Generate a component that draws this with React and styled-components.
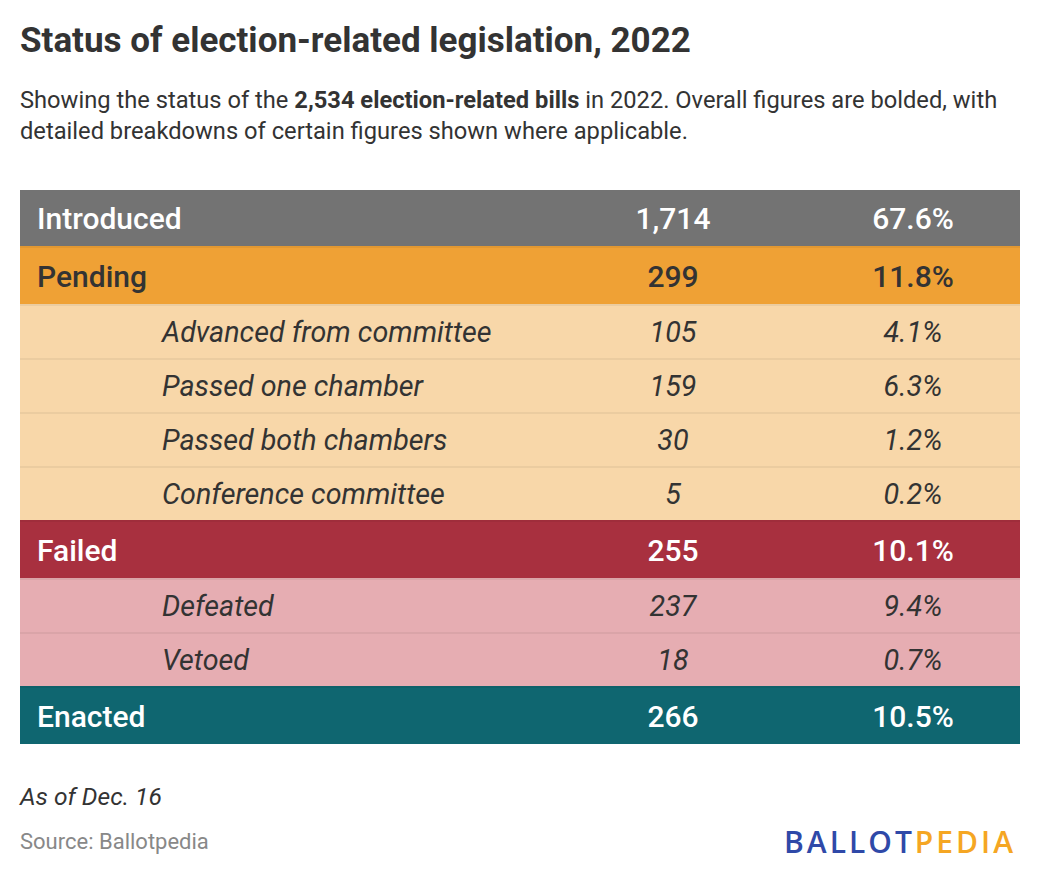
import React from "react";
import styled, { createGlobalStyle } from "styled-components";

const Global = createGlobalStyle`
  html, body { margin: 0; padding: 0; background: #fff; }
  body { font-family: Roboto, "Liberation Sans", sans-serif; color: #333; }
`;

const Page = styled.div`
  width: 1040px;
  height: 884px;
  box-sizing: border-box;
  padding: 19px 20px 0 20px;
  display: flex;
  flex-direction: column;
`;

const Title = styled.h1`
  margin: 0;
  font-size: 35px;
  line-height: 44px;
  font-weight: 700;
  color: #333;
`;

const Subtitle = styled.p`
  margin: 22px 0 0 0;
  font-size: 23.7px;
  line-height: 31px;
  color: #333;
`;

const Strong = styled.strong`
  font-weight: 700;
`;

const Table = styled.div`
  margin-top: 43px;
  width: 1000px;
  display: flex;
  flex-direction: column;
`;

const Row = styled.div`
  display: grid;
  grid-template-columns: 520px 266px 214px;
  align-items: center;
  box-sizing: border-box;
  height: ${(p) => (p.$sub ? 54 : p.$first ? 56 : 58)}px;
  background: ${(p) => p.$bg};
  color: ${(p) => p.$fg};
  border-top: ${(p) => (p.$first ? "none" : "2px solid rgba(0,0,0,0.05)")};
  font-size: ${(p) => (p.$sub ? "28.7px" : "30px")};
  font-weight: ${(p) => (p.$sub ? 400 : 500)};
  font-style: ${(p) => (p.$sub ? "italic" : "normal")};
`;

const Label = styled.div`
  padding-left: ${(p) => (p.$sub ? "142px" : "17px")};
`;

const Num = styled.div`
  text-align: center;
`;

const Footer = styled.div`
  margin-top: 38px;
  display: flex;
  flex-direction: column;
`;

const Note = styled.div`
  font-style: italic;
  font-size: 24.6px;
  line-height: 30px;
  color: #333;
`;

const SourceRow = styled.div`
  margin-top: 15px;
  display: flex;
  justify-content: space-between;
  align-items: center;
`;

const Source = styled.div`
  font-size: 22px;
  line-height: 30px;
  color: #888;
`;

const Logo = styled.div`
  font-family: "Open Sans", "Liberation Sans", sans-serif;
  font-weight: 600;
  font-size: 30px;
  letter-spacing: 3px;
  line-height: 30px;
  margin-right: 4px;
`;

const LogoPart = styled.span`
  color: ${(p) => p.$c};
`;

const rows = [
  { label: "Introduced", n: "1,714", p: "67.6%", bg: "#737373", fg: "#fff" },
  { label: "Pending", n: "299", p: "11.8%", bg: "#efa135", fg: "#333" },
  { label: "Advanced from committee", n: "105", p: "4.1%", bg: "#f8d7a9", fg: "#333", sub: true },
  { label: "Passed one chamber", n: "159", p: "6.3%", bg: "#f8d7a9", fg: "#333", sub: true },
  { label: "Passed both chambers", n: "30", p: "1.2%", bg: "#f8d7a9", fg: "#333", sub: true },
  { label: "Conference committee", n: "5", p: "0.2%", bg: "#f8d7a9", fg: "#333", sub: true },
  { label: "Failed", n: "255", p: "10.1%", bg: "#a8303f", fg: "#fff" },
  { label: "Defeated", n: "237", p: "9.4%", bg: "#e6adb2", fg: "#333", sub: true },
  { label: "Vetoed", n: "18", p: "0.7%", bg: "#e6adb2", fg: "#333", sub: true },
  { label: "Enacted", n: "266", p: "10.5%", bg: "#0f6670", fg: "#fff" },
];

export default function App() {
  return (
    <>
      <Global />
      <Page>
        <Title>Status of election-related legislation, 2022</Title>
        <Subtitle>
          Showing the status of the <Strong>2,534 election-related bills</Strong> in 2022. Overall figures are bolded, with
          detailed breakdowns of certain figures shown where applicable.
        </Subtitle>
        <Table>
          {rows.map((r, i) => (
            <Row key={r.label} $bg={r.bg} $fg={r.fg} $sub={r.sub} $first={i === 0}>
              <Label $sub={r.sub}>{r.label}</Label>
              <Num>{r.n}</Num>
              <Num>{r.p}</Num>
            </Row>
          ))}
        </Table>
        <Footer>
          <Note>As of Dec. 16</Note>
          <SourceRow>
            <Source>Source: Ballotpedia</Source>
            <Logo>
              <LogoPart $c="#2f49a8">BALLOT</LogoPart>
              <LogoPart $c="#f5a623">PEDIA</LogoPart>
            </Logo>
          </SourceRow>
        </Footer>
      </Page>
    </>
  );
}
